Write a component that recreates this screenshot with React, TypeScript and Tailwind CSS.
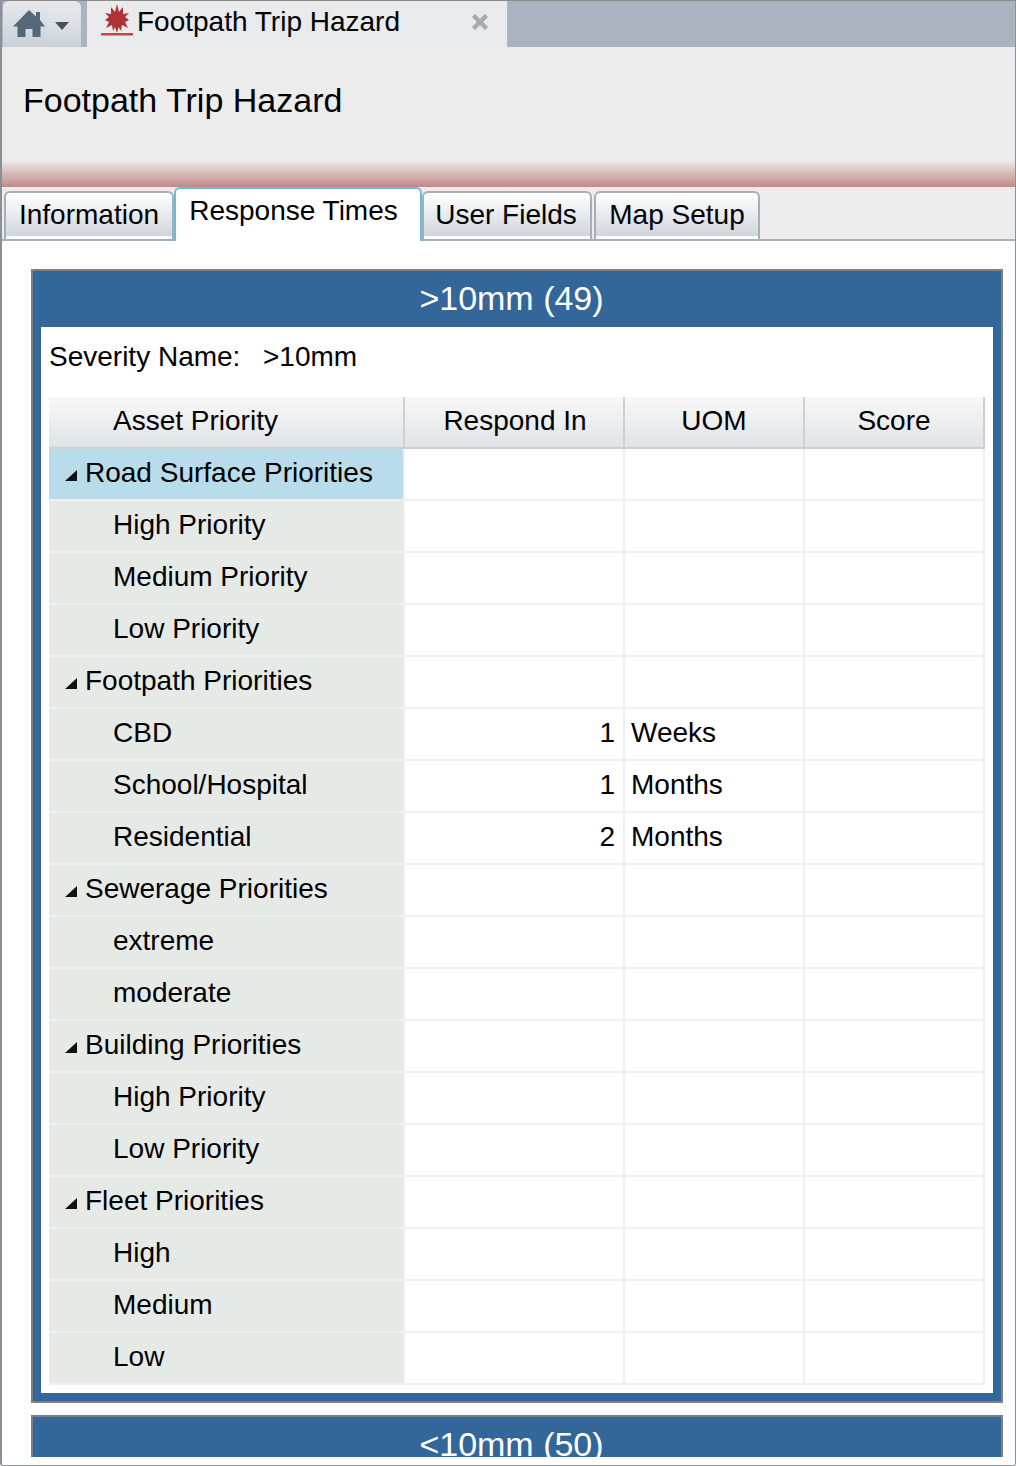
type Row = {
  name: string;
  group?: boolean;
  selected?: boolean;
  respond?: string;
  uom?: string;
};

const rows: Row[] = [
  { name: "Road Surface Priorities", group: true, selected: true },
  { name: "High Priority" },
  { name: "Medium Priority" },
  { name: "Low Priority" },
  { name: "Footpath Priorities", group: true },
  { name: "CBD", respond: "1", uom: "Weeks" },
  { name: "School/Hospital", respond: "1", uom: "Months" },
  { name: "Residential", respond: "2", uom: "Months" },
  { name: "Sewerage Priorities", group: true },
  { name: "extreme" },
  { name: "moderate" },
  { name: "Building Priorities", group: true },
  { name: "High Priority" },
  { name: "Low Priority" },
  { name: "Fleet Priorities", group: true },
  { name: "High" },
  { name: "Medium" },
  { name: "Low" },
];

const HomeIcon = () => (
  <svg width="34" height="30" viewBox="0 0 34 30" className="shrink-0">
    <path
      fill="#56677a"
      d="M17 1 L24 7.5 V3 H28 V11 L33 17.5 H28.5 V28 H20.5 V20 H13.5 V28 H5.5 V17.5 H1 Z"
    />
  </svg>
);

const HazardIcon = () => (
  <svg width="32" height="36" viewBox="0 0 32 36" className="mb-[4px] shrink-0">
    <polygon
      fill="#b03235"
      points="16,0 18,8 22,3 22,10 28,9 24,13 28,16 24,18 27,24 21,21 20,27 17.5,23 16,29 14,23 12,27 11,21 5,24 8,18 4,16 8,13 4,9 10,10 10,3 14,8"
    />
    <rect x="0" y="29" width="32" height="2.5" fill="#c0474a" />
  </svg>
);

const Tab = ({ label, width, shift }: { label: string; width: string; shift?: string }) => (
  <div
    className={`${width} ${shift ?? ""} mr-0.5 flex h-[48px] items-center justify-center rounded-t-[6px] border-2 border-b-0 border-[#a5afba] bg-gradient-to-b from-white to-[#cdd3da] pb-[2px] shadow-[inset_0_-3px_0_#fff]`}
  >
    {label}
  </div>
);

const GridRow = ({ row }: { row: Row }) => (
  <div className="grid h-[52px] grid-cols-[356px_220px_180px_180px]">
    <div
      className={`flex items-center border-r-2 border-b-2 border-[#f0f0f0] pb-[2px] ${
        row.selected ? "bg-[#b9dcea]" : "bg-[#e6eae7]"
      } ${row.group ? "pl-4" : "pl-16"}`}
    >
      {row.group && (
        <svg width="12" height="12" viewBox="0 0 12 12" className="mr-2 mt-1 shrink-0">
          <polygon points="12,1 12,12 0,12" fill="#111" />
        </svg>
      )}
      {row.name}
    </div>
    <div className="flex items-center justify-end border-r-2 border-b-2 border-[#f0f0f0] pr-2 pb-[2px]">
      {row.respond}
    </div>
    <div className="flex items-center border-r-2 border-b-2 border-[#f0f0f0] pl-1.5 pb-[2px]">{row.uom}</div>
    <div className="border-r-2 border-b-2 border-[#f0f0f0]" />
  </div>
);

export default function App() {
  return (
    <div className="flex h-[1466px] w-[1016px] flex-col overflow-hidden rounded-b-[3px] border-r border-b border-l-2 border-[#8a9096] bg-[#ececec] font-['Liberation_Sans',Arial,sans-serif] text-[28px] text-black">
      {/* top strip */}
      <div className="flex h-[47px] shrink-0 border-t border-[#8a8a8a] bg-[#aab4c0]">
        <div className="ml-px flex h-[46px] w-[78px] items-center rounded-t-[6px] bg-gradient-to-b from-[#e6e9ec] to-[#c8d0d9] pl-[9px]">
          <HomeIcon />
          <div className="ml-px flex h-[33px] w-[32px] items-center justify-center rounded-[4px] bg-white/10">
            <svg width="14" height="8" viewBox="0 0 14 8" className="mt-[4px] mr-[3px] shrink-0">
              <polygon points="0,0 14,0 7,8" fill="#45505c" />
            </svg>
          </div>
        </div>
        <div className="ml-[6px] flex h-[46px] w-[420px] items-center bg-[#e8eaeb] pl-[14px]">
          <HazardIcon />
          <span className="mb-1 ml-[4px]">Footpath Trip Hazard</span>
          <svg width="18" height="18" viewBox="0 0 18 18" className="mb-[4px] ml-[71px] shrink-0">
            <path d="M2.5 2.5 L15.5 15.5 M15.5 2.5 L2.5 15.5" stroke="#a9a9a9" strokeWidth="4.5" />
          </svg>
        </div>
      </div>

      <div className="flex h-[113px] shrink-0 items-center pb-[6px] pl-[21px] text-[34px]">
        Footpath Trip Hazard
      </div>
      <div className="h-[27px] shrink-0 bg-gradient-to-b from-[#ececec] to-[#bf8a88]" />

      {/* tabs */}
      <div className="relative flex h-[54px] shrink-0 items-end border-b-2 border-[#a5afba] pl-[2px]">
        <Tab label="Information" width="w-[170px]" />
        <div className="relative z-10 -mb-[2px] -ml-[2px] flex h-[54px] w-[248px] items-center justify-center rounded-t-[6px] border-2 border-b-0 border-[#6cbdd4] bg-white pr-[9px] pb-[8px]">
          Response Times
        </div>
        <Tab label="User Fields" width="w-[170px]" shift="pr-[2px]" />
        <Tab label="Map Setup" width="w-[166px]" />
      </div>

      {/* content */}
      <div className="min-h-0 flex-1 overflow-hidden bg-white pt-[28px] pr-[12px] pl-[29px]">
        <div className="border-2 border-[#808080] bg-[#336699]">
          <div className="flex h-[56px] items-center justify-center pr-[11px] pb-[2px] text-[34px] text-white">&gt;10mm (49)</div>
          <div className="mx-2 mb-2 bg-white px-2 pb-2">
            <div className="flex h-[70px] items-center pb-[10px]">
              <span className="w-[214px]">Severity Name:</span>
              <span>&gt;10mm</span>
            </div>
            <div className="grid h-[52px] grid-cols-[356px_220px_180px_180px] border-b-2 border-[#cfcfcf] bg-gradient-to-b from-[#f8f8f8] to-[#dfe3e7]">
              <div className="flex items-center border-r-2 border-[#cfcfcf] pb-[2px] pl-16">Asset Priority</div>
              <div className="flex items-center justify-center border-r-2 border-[#cfcfcf] pb-[2px] pl-[2px]">Respond In</div>
              <div className="flex items-center justify-center border-r-2 border-[#cfcfcf] pb-[2px]">UOM</div>
              <div className="flex items-center justify-center border-r-2 border-[#cfcfcf] pb-[2px]">Score</div>
            </div>
            {rows.map((row, i) => (
              <GridRow key={i} row={row} />
            ))}
          </div>
        </div>
        <div className="mt-3 h-[42px] overflow-hidden border-2 border-b-0 border-[#808080] bg-[#336699]">
          <div className="flex h-[56px] items-center justify-center pr-[11px] pb-[2px] text-[34px] text-white">&lt;10mm (50)</div>
        </div>
      </div>
    </div>
  );
}
